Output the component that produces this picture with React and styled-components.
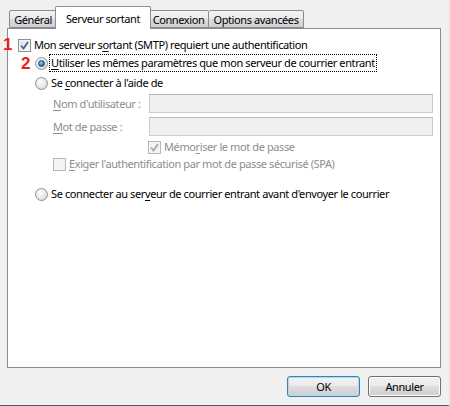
import React from 'react'
import styled, { createGlobalStyle, css } from 'styled-components'

const GlobalStyle = createGlobalStyle`
  html, body {
    margin: 0;
    padding: 0;
    background: #f0f0f0;
  }
  body {
    font-family: "Noto Sans", "Open Sans", sans-serif;
    font-size: 11px;
    letter-spacing: -0.4px;
    color: #000;
  }
`

const Dialog = styled.div`
  box-sizing: border-box;
  width: 450px;
  height: 406px;
  background: #f0f0f0;
  border-bottom: 1px solid #4a5a6c;
  border-right: 2px solid #f4e8ee;
  padding: 0 7px 0 7px;
  display: flex;
  flex-direction: column;
`

const TabStrip = styled.div`
  display: flex;
  align-items: flex-end;
  height: 28px;
  padding-left: 2px;
  position: relative;
  z-index: 1;
`

const Tab = styled.div`
  box-sizing: border-box;
  width: ${p => p.$w}px;
  height: ${p => (p.$active ? '23px' : '18px')};
  margin-bottom: ${p => (p.$active ? '-1px' : '0')};
  margin-left: ${p => (p.$active ? '-2px' : '0')};
  margin-right: ${p => (p.$active ? '-2px' : '0')};
  border: 1px solid #898c95;
  border-bottom: ${p => (p.$active ? 'none' : '1px solid #898c95')};
  border-left: ${p => (p.$first || p.$active ? '1px solid #898c95' : 'none')};
  border-radius: 2px 2px 0 0;
  background: ${p => (p.$active ? '#fff' : 'linear-gradient(#f2f2f2 0%, #ebebeb 45%, #dddddd 50%, #cfcfcf 100%)')};
  display: flex;
  align-items: center;
  justify-content: center;
  white-space: nowrap;
  position: relative;
  z-index: ${p => (p.$active ? 2 : 1)};
  padding-top: ${p => (p.$active ? '0' : '1px')};
`

const Panel = styled.div`
  box-sizing: border-box;
  height: 340px;
  background: #fff;
  border: 1px solid #898c95;
  padding: 8px 0 0 10px;
  display: flex;
  flex-direction: column;
  position: relative;
`

const Row = styled.div`
  display: flex;
  align-items: center;
  height: ${p => p.$h || 16}px;
  margin-top: ${p => p.$top || 0}px;
  margin-left: ${p => p.$indent || 0}px;
  position: relative;
  white-space: nowrap;
`

const Marker = styled.span`
  position: absolute;
  top: ${p => p.$y}px;
  left: ${p => p.$x}px;
  color: #e8201a;
  font-family: "Liberation Sans", Arial, sans-serif;
  font-weight: bold;
  font-size: 17px;
  letter-spacing: 0;
  line-height: 16px;
`

const Label = styled.span`
  color: ${p => (p.$disabled ? '#8d8d8d' : '#000')};
  margin-left: ${p => p.$gap ?? 3}px;
  line-height: 16px;
  ${p => p.$focus && css`
    outline: 1px dotted #000;
    outline-offset: 0;
    padding: 0 1px;
    margin-left: 2px;
  `}
  u {
    text-decoration: underline;
    text-underline-offset: 2px;
  }
`

const FieldLabel = styled.span`
  width: 96px;
  color: #8d8d8d;
  padding-left: 1px;
  u {
    text-decoration: underline;
    text-underline-offset: 2px;
  }
`

const Input = styled.div`
  box-sizing: border-box;
  width: 284px;
  height: 19px;
  background: #f0f0f0;
  border: 1px solid #c8cbd0;
  border-top-color: #b5b8be;
`

const Box = styled.span`
  box-sizing: border-box;
  width: 13px;
  height: 13px;
  flex: none;
  border: 1px solid ${p => (p.$disabled ? '#b6b6b6' : '#8e8f8f')};
  background: ${p => (p.$disabled ? '#f4f4f4' : 'linear-gradient(135deg, #dcdcdc, #fefefe)')};
  box-shadow: inset 0 0 0 1px #f4f4f4;
  display: flex;
  align-items: center;
  justify-content: center;
`

const Radio = styled.span`
  box-sizing: border-box;
  width: 13px;
  height: 13px;
  flex: none;
  border-radius: 50%;
  border: 1px solid #8e8f8f;
  background: radial-gradient(circle at 40% 35%, #ffffff 0%, #e4e4e4 60%, #cfcfcf 100%);
  display: flex;
  align-items: center;
  justify-content: center;
  &::after {
    content: '';
    display: ${p => (p.$checked ? 'block' : 'none')};
    width: 5px;
    height: 5px;
    border-radius: 50%;
    background: radial-gradient(circle at 40% 35%, #8fd3f3 0%, #1a6ea3 70%, #0d4d79 100%);
    border: 1px solid #1c4f74;
  }
`

const Footer = styled.div`
  display: flex;
  justify-content: flex-end;
  gap: 8px;
  padding-top: 8px;
`

const Button = styled.button`
  box-sizing: border-box;
  width: 73px;
  height: 21px;
  font-family: inherit;
  font-size: 11px;
  letter-spacing: -0.4px;
  color: #000;
  border-radius: 3px;
  border: 1px solid ${p => (p.$default ? '#3c7fb1' : '#707070')};
  background: linear-gradient(#f2f2f2 0%, #ebebeb 45%, #dddddd 50%, #cfcfcf 100%);
  box-shadow: inset 0 0 0 1px ${p => (p.$default ? '#a8dcf5' : '#fcfcfc')};
  padding: 0;
`

function Check({ checked, disabled }) {
  return (
    <Box $disabled={disabled}>
      {checked ? (
        <svg width="9" height="9" viewBox="0 0 9 9">
          <path d="M1 4.5 L3.5 7.5 L8 1" fill="none" stroke={disabled ? '#a8a8a8' : '#4a5f97'} strokeWidth="1.8" />
        </svg>
      ) : null}
    </Box>
  )
}

const tabs = [
  { label: 'Général', w: 48 },
  { label: 'Serveur sortant', w: 96 },
  { label: 'Connexion', w: 60 },
  { label: 'Options avancées', w: 95 },
]

export default function App() {
  return (
    <>
      <GlobalStyle />
      <Dialog>
        <TabStrip>
          {tabs.map((t, i) => (
            <Tab key={t.label} $w={t.w} $first={i === 0} $active={i === 1}>{t.label}</Tab>
          ))}
        </TabStrip>
        <Panel>
          <Row $top={0}>
            <Marker $x={-15} $y={0}>1</Marker>
            <Check checked />
            <Label>Mon serveur s<u>o</u>rtant (SMTP) requiert une authentification</Label>
          </Row>
          <Row $top={2} $indent={17}>
            <Marker $x={-14} $y={1}>2</Marker>
            <Radio $checked />
            <Label $focus><u>U</u>tiliser les mêmes paramètres que mon serveur de courrier entrant</Label>
          </Row>
          <Row $top={4} $indent={17}>
            <Radio />
            <Label>Se <u>c</u>onnecter à l'aide de</Label>
          </Row>
          <Row $top={3} $h={19} $indent={34}>
            <FieldLabel><u>N</u>om d'utilisateur :</FieldLabel>
            <Input />
          </Row>
          <Row $top={4} $h={19} $indent={34}>
            <FieldLabel><u>M</u>ot de passe :</FieldLabel>
            <Input />
          </Row>
          <Row $top={3} $indent={130}>
            <Check checked disabled />
            <Label $disabled>Mémo<u>r</u>iser le mot de passe</Label>
          </Row>
          <Row $top={1} $indent={35}>
            <Check disabled />
            <Label $disabled><u>E</u>xiger l'authentification par mot de passe sécurisé (SPA)</Label>
          </Row>
          <Row $top={14} $indent={17}>
            <Radio />
            <Label>Se connecter au ser<u>v</u>eur de courrier entrant avant d'envoyer le courrier</Label>
          </Row>
        </Panel>
        <Footer>
          <Button $default>OK</Button>
          <Button>Annuler</Button>
        </Footer>
      </Dialog>
    </>
  )
}
